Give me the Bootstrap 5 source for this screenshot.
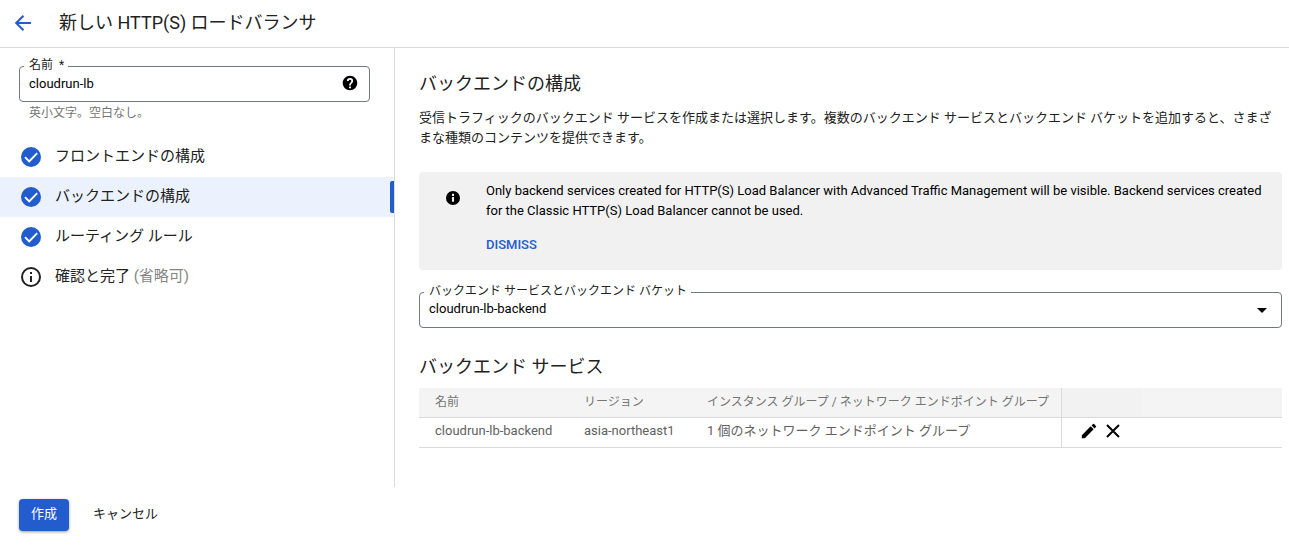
<!DOCTYPE html>
<html lang="ja">
<head>
<meta charset="utf-8">
<meta name="viewport" content="width=device-width, initial-scale=1">
<title>新しい HTTP(S) ロードバランサ</title>
<link rel="stylesheet" href="https://cdn.jsdelivr.net/npm/bootstrap@5.3.0/dist/css/bootstrap.min.css">
<style>
  :root { --blue: #235ccd; --line: #dadada; --ink: #212121; }
  body { font: 400 13px/20px Roboto, "Noto Sans CJK JP", sans-serif; color: var(--ink); }
  svg { display: block; flex: none; }
  .page-head { height: 48px; padding: 0 15px 1px; gap: 28px; border-bottom: 1px solid var(--line); }
  .page-head a { color: var(--blue); }
  h1, h2 { font-size: 18px; line-height: 24px; font-weight: 400; }
  .side { width: 395px; border-right: 1px solid var(--line); }
  .side-form { padding: 18px 24px 0 19px; }
  .outlined { position: relative; }
  .outlined label { position: absolute; top: -8px; left: 5px; padding: 0 4px 0 5px; background: #fff; font-size: 12px; line-height: 14px; z-index: 1; }
  .outlined .form-control, .outlined .form-select { height: 36px; padding: 0 9px 2px; border: 1px solid #73787d; border-radius: 4px; font-size: 13px; line-height: 20px; color: #000; }
  .outlined .form-select { background-size: 10px 5px; background-position: right 14px center; background-image: url("data:image/svg+xml,%3csvg xmlns='http://www.w3.org/2000/svg' viewBox='0 0 10 5'%3e%3cpath d='M0 0h10L5 5z'/%3e%3c/svg%3e"); }
  .help { position: absolute; top: 9px; right: 12px; }
  .hint { font-size: 12px; padding: 1px 10px 0; color: #757575; }
  .steps { padding-top: 14px; }
  .steps a { height: 40px; padding: 0 20px 2px; gap: 13px; font-size: 15px; color: var(--ink); text-decoration: none; }
  .steps a.active { background: #ebf2fd; position: relative; }
  .steps a.active::after { content: ""; position: absolute; right: 0; top: 4px; bottom: 4px; width: 4px; border-radius: 2px 0 0 2px; background: var(--blue); }
  .steps svg { margin-top: 2px; }
  .optional { color: #858585; }
  .content-pane { padding: 24px 7px 0 24px; }
  .notice { background: #f1f1f1; border-radius: 4px; padding: 9px 16px 15px 27px; gap: 26px; margin-bottom: 22px; color: #000; }
  .notice p { margin-bottom: 14px; }
  .notice svg { margin-top: 10px; }
  .notice .btn { color: var(--blue); font-size: 13px; line-height: 20px; font-weight: 500; }
  .services-title { margin: 27px 0 9px; }
  .services { table-layout: fixed; color: #616161; border-bottom: 1px solid var(--line); }
  .services th, .services td { height: 29px; padding: 0 0 2px 16px; text-align: left; white-space: nowrap; }
  .services td { height: 30px; }
  .services th { padding-bottom: 0; font-weight: 400; font-size: 12px; background: #f4f4f4; color: #757575; border-bottom: 1px solid var(--line); }
  .services th.tools { background: #f2f2f2; }
  .services .tools { border-left: 1px solid var(--line); padding-left: 19px; }
  .page-foot { height: 60px; padding: 12px 19px; }
  .page-foot .btn { height: 32px; font-size: 13px; line-height: 20px; padding: 4px 12px 6px; border: 0; border-radius: 4px; color: var(--ink); }
  .page-foot .btn-create { background: var(--blue); color: #fff; box-shadow: 0 1px 3px rgba(0,0,0,.4); }
</style>
</head>
<body class="d-flex flex-column min-vh-100">
<svg class="d-none">
  <symbol id="check" viewBox="0 0 24 24"><path fill="#235ccd" d="M12 2a10 10 0 1 0 0 20 10 10 0 0 0 0-20z"/><path fill="none" stroke="#fff" stroke-width="1.9" d="m6 12.2 4.2 4.2L18.200 8.200"/></symbol>
</svg>
<header class="page-head d-flex align-items-center">
  <a href="#" aria-label="戻る"><svg width="16" height="16" viewBox="0 0 16 16" fill="none" stroke="currentColor" stroke-width="2"><path d="M16 8H1.500M8.500 .7 1.200 8l7.300 7.300"/></svg></a>
  <h1 class="m-0">新しい HTTP(S) ロードバランサ</h1>
</header>
<div class="d-flex flex-grow-1">
  <aside class="side flex-shrink-0">
    <div class="side-form">
      <div class="outlined">
        <label for="lbname">名前 &nbsp;*</label>
        <input id="lbname" class="form-control" type="text" value="cloudrun-lb">
        <svg class="help" width="16" height="16" viewBox="1 1 22 22"><path d="M12 2C6.480 2 2 6.480 2 12s4.480 10 10 10 10-4.480 10-10S17.520 2 12 2zm1.300 17.300h-2.600v-2.600h2.600v2.600zm2.200-7.800-.9.900c-.8.800-1.300 1.400-1.300 2.900h-2.500v-.6c0-1.100.5-2.100 1.200-2.800l1.300-1.300c.3-.3.500-.7.500-1.200a1.800 1.800 0 0 0-3.600 0H7.700a4.300 4.300 0 0 1 8.600 0c0 .8-.3 1.500-.8 2.100z"/></svg>
      </div>
      <div class="hint">英小文字。空白なし。</div>
    </div>
    <nav class="steps d-flex flex-column">
      <a href="#" class="d-flex align-items-center"><svg width="22" height="22" viewBox="1 1 22 22"><use href="#check" width="24" height="24"/></svg>フロントエンドの構成</a>
      <a href="#" class="d-flex align-items-center active" aria-current="step"><svg width="22" height="22" viewBox="1 1 22 22"><use href="#check" width="24" height="24"/></svg>バックエンドの構成</a>
      <a href="#" class="d-flex align-items-center"><svg width="22" height="22" viewBox="1 1 22 22"><use href="#check" width="24" height="24"/></svg>ルーティング ルール</a>
      <a href="#" class="d-flex align-items-center"><svg width="22" height="22" viewBox="1 1 22 22" fill="none" stroke="#212121" stroke-width="2"><circle cx="12" cy="12" r="9"/><path d="M12 11v6M12 7v2"/></svg><span>確認と完了 <span class="optional">(省略可)</span></span></a>
    </nav>
  </aside>
  <main class="content-pane flex-grow-1">
    <h2 class="mb-2 pb-1">バックエンドの構成</h2>
    <p class="mb-4">受信トラフィックのバックエンド サービスを作成または選択します。複数のバックエンド サービスとバックエンド バケットを追加すると、さまざまな種類のコンテンツを提供できます。</p>
    <div class="notice d-flex align-items-start" role="status">
      <svg width="14" height="14" viewBox="2 2 20 20"><path fill-rule="evenodd" d="M12 2a10 10 0 1 0 0 20 10 10 0 0 0 0-20zm1.500 15.500h-3v-7h3v7zm0-8.500h-3V6h3v3z"/></svg>
      <div>
        <p>Only backend services created for HTTP(S) Load Balancer with Advanced Traffic Management will be visible. Backend services created for the Classic HTTP(S) Load Balancer cannot be used.</p>
        <button type="button" class="btn d-block border-0 p-0">DISMISS</button>
      </div>
    </div>
    <div class="outlined">
      <label for="backend">バックエンド サービスとバックエンド バケット</label>
      <select id="backend" class="form-select"><option>cloudrun-lb-backend</option></select>
    </div>
    <h2 class="services-title">バックエンド サービス</h2>
    <table class="services w-100">
      <colgroup><col style="width:149px"><col style="width:123px"><col style="width:370px"><col style="width:81px"><col></colgroup>
      <thead><tr><th>名前</th><th>リージョン</th><th>インスタンス グループ / ネットワーク エンドポイント グループ</th><th class="tools"></th><th></th></tr></thead>
      <tbody><tr><td>cloudrun-lb-backend</td><td>asia-northeast1</td><td>1 個のネットワーク エンドポイント グループ</td>
        <td class="tools"><div class="d-flex gap-2">
          <button type="button" class="btn border-0 p-0" aria-label="編集"><svg width="16" height="16" viewBox="2 2 20 20"><path d="M3 17.200V21h3.800L17.800 9.900l-3.700-3.700L3 17.200zM20.700 7a1 1 0 0 0 0-1.400l-2.300-2.300a1 1 0 0 0-1.400 0l-1.800 1.800 3.700 3.700L20.700 7z"/></svg></button>
          <button type="button" class="btn border-0 p-0" aria-label="削除"><svg width="16" height="16" viewBox="0 0 16 16" stroke="#000" stroke-width="2"><path d="m2 2 12 12M14 2 2 14"/></svg></button>
        </div></td><td></td></tr></tbody>
    </table>
  </main>
</div>
<footer class="page-foot d-flex">
  <button type="button" class="btn btn-create">作成</button>
  <button type="button" class="btn ms-2 me-2 px-3">キャンセル</button>
</footer>
</body>
</html>
